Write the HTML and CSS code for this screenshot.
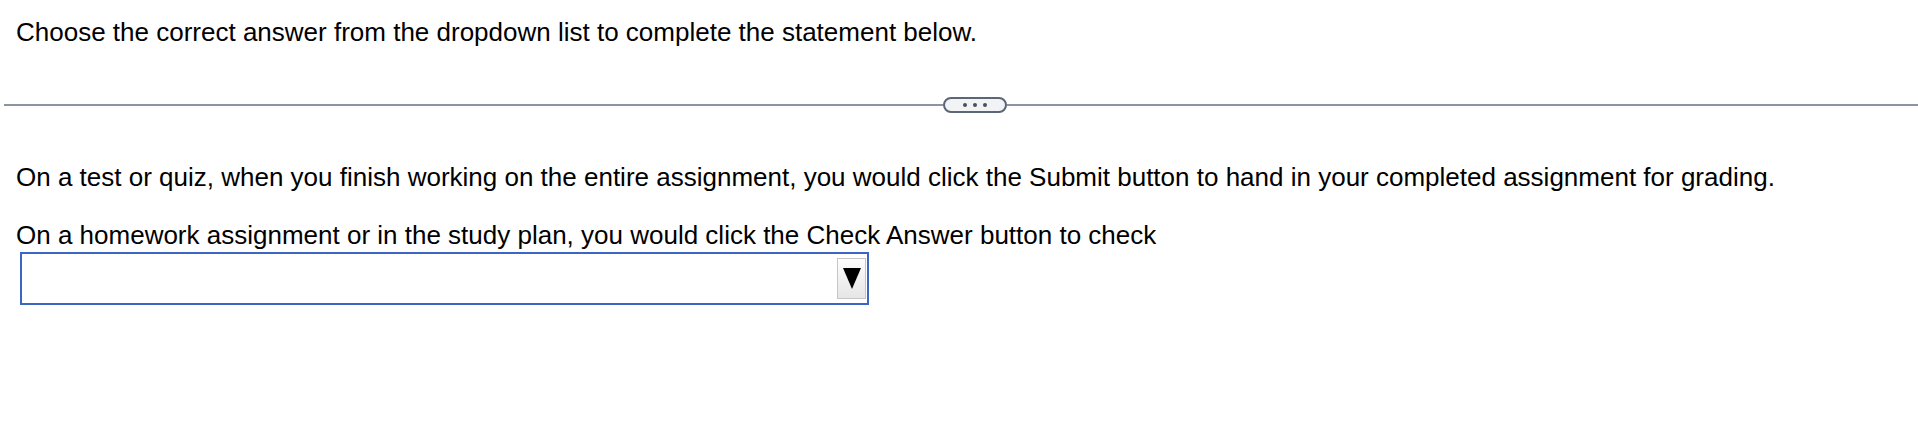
FILE: index.html
```html
<!DOCTYPE html>
<html>
<head>
<meta charset="utf-8">
<link rel="stylesheet" href="styles.css">
</head>
<body>
<div class="instr">Choose the correct answer from the dropdown list to complete the statement below.</div>
<div class="divider">
  <span class="rule rule-left"></span>
  <span class="pill"><i></i><i></i><i></i></span>
  <span class="rule rule-right"></span>
</div>
<div class="question">
  <p class="line">On a test or quiz, when you finish working on the entire assignment, you would click the Submit button to hand in your completed assignment for grading.</p>
  <p class="line line-second">On a homework assignment or in the study plan, you would click the Check Answer button to check</p>
  <div class="select"><span class="arrow"><span class="tri"></span></span></div>
</div>
</body>
</html>
```
FILE: styles.css
```css
html, body {
  margin: 0;
  padding: 0;
  background: #ffffff;
}
body {
  font-family: "Liberation Sans", Arial, Helvetica, sans-serif;
  font-size: 26px;
  color: #000;
}
.instr {
  padding: 17px 0 0 16px;
  line-height: 30px;
}
.divider {
  display: flex;
  align-items: center;
  margin: 50px 0 0 4px;
  height: 16px;
}
.rule {
  height: 2px;
  background: #8a94a3;
}
.rule-left {
  flex: 0 0 939px;
}
.rule-right {
  flex: 1 1 auto;
}
.pill {
  box-sizing: border-box;
  width: 64px;
  height: 16px;
  border: 2px solid #5b6678;
  border-radius: 8px;
  background: #f1f3f5;
  display: flex;
  justify-content: center;
  align-items: center;
  gap: 6px;
}
.pill i {
  display: block;
  width: 4px;
  height: 4px;
  border-radius: 50%;
  background: #4a5060;
}
.question {
  padding: 49px 0 0 16px;
}
.line {
  margin: 0;
  line-height: 30px;
}
.line-second {
  margin-top: 28px;
}
.select {
  box-sizing: border-box;
  margin: 2px 0 0 4px;
  width: 849px;
  height: 53px;
  border: 2px solid #3d66c4;
  display: flex;
  justify-content: flex-end;
  align-items: center;
  padding-right: 1px;
}
.arrow {
  box-sizing: border-box;
  width: 29px;
  height: 41px;
  border: 1px solid #c6c6c6;
  background: linear-gradient(#fdfdfd, #e6e6e6);
  display: flex;
  align-items: center;
  justify-content: center;
}
.tri {
  width: 0;
  height: 0;
  border-left: 9px solid transparent;
  border-right: 9px solid transparent;
  border-top: 21px solid #000;
}
```
